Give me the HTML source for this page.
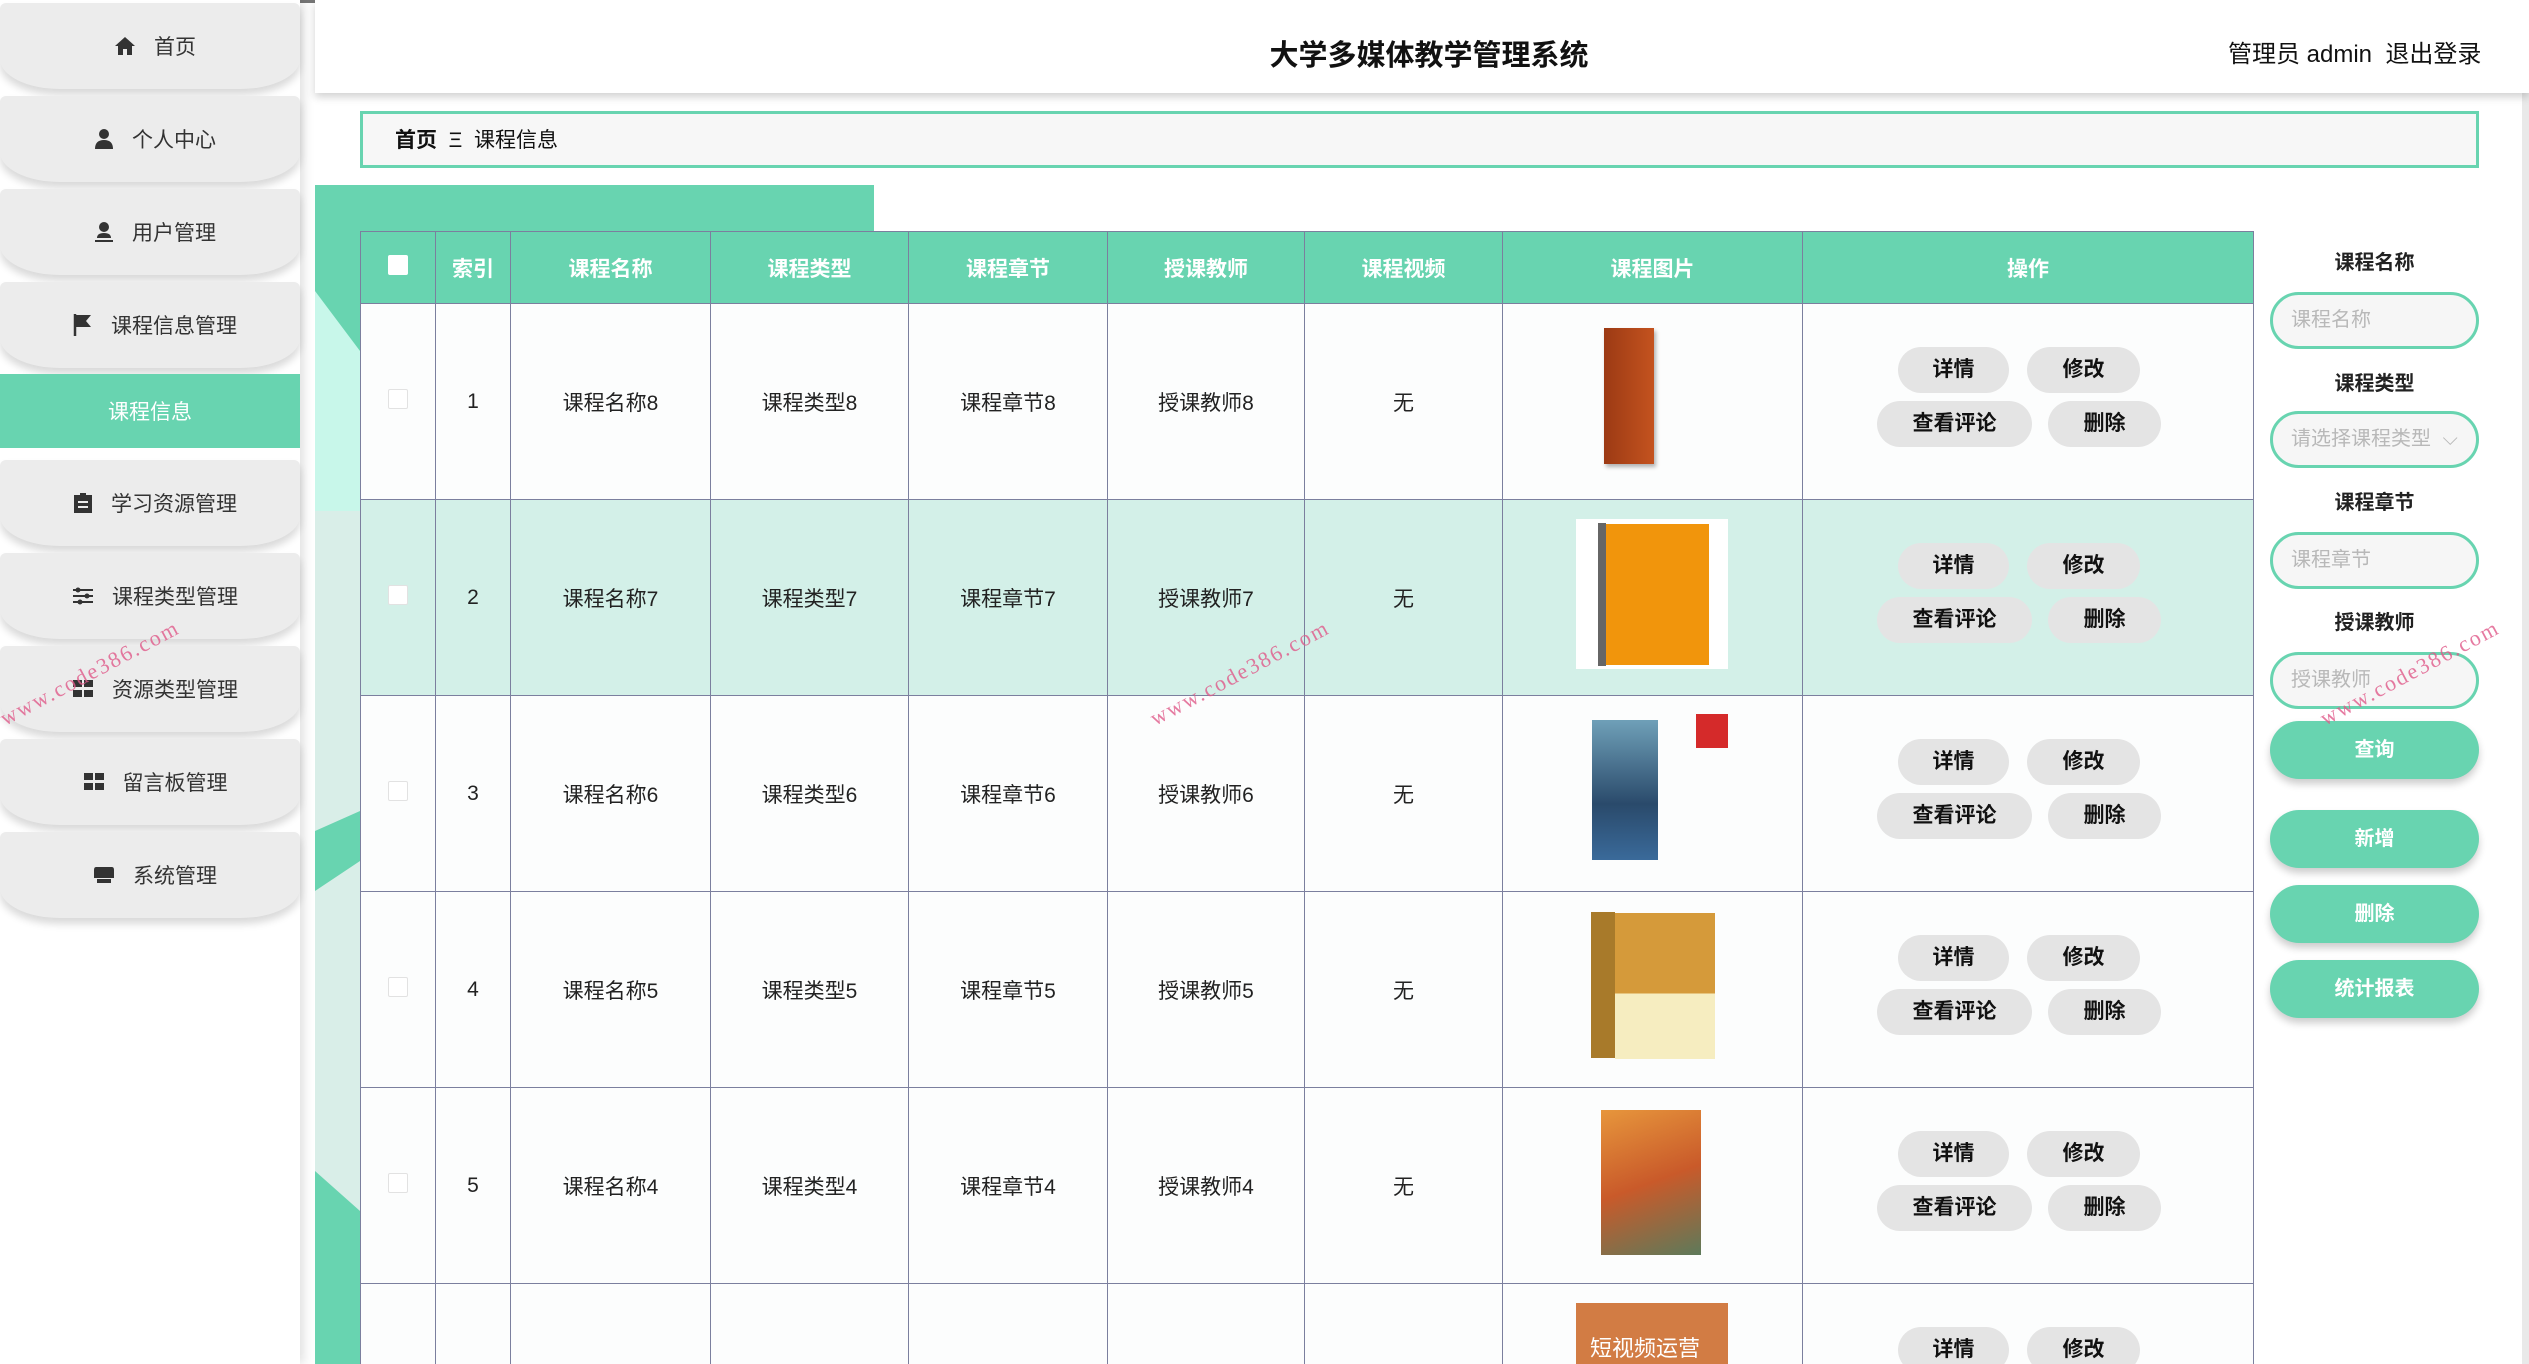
<!DOCTYPE html>
<html style="width:2529px;height:1364px;overflow:hidden"><head><meta charset="utf-8"><style>
*{margin:0;padding:0;box-sizing:border-box}
html,body{width:2529px;height:1364px;overflow:hidden}
body{background:#fff;font-family:"Liberation Sans","Noto Sans CJK SC",sans-serif;color:#222}
#wrap{position:relative;width:2529px;height:1364px;overflow:hidden}
.abs{position:absolute}
.side{left:0;top:0;width:300px;height:1364px;background:#fff;box-shadow:4px 0 10px rgba(0,0,0,.12)}
.it{position:absolute;left:0;width:300px;height:86px;padding-left:10px;background:#ececec;border-radius:6px 6px 60px 60px/6px 6px 30px 30px;box-shadow:0 6px 8px rgba(0,0,0,.15);display:flex;align-items:center;justify-content:center;font-size:21px;color:#333}
.it svg{margin-right:18px}
.act{background:#68d4b0;color:#fff;border-radius:0;box-shadow:none;height:74px;padding-left:0}
.top{left:315px;top:0;width:2214px;height:93px;background:#fff;box-shadow:0 4px 8px rgba(0,0,0,.18)}
table{border-collapse:collapse;position:absolute;left:360px;top:231px;table-layout:fixed}
td,th{border:1px solid #7b7f9e;text-align:center;font-size:21px}
th{background:#68d4b0;color:#fff;height:72px;font-weight:bold}
td{height:196px;background:#fcfdfd}
tr.last td{height:80px;border-bottom:none}
tr.m td{background:#d3f0e8}
.cb{display:inline-block;width:20px;height:20px;background:#fff;border:1px solid #e2e2e2;border-radius:2px}
.b{position:absolute;height:46px;border-radius:23px;background:#e4e4e4;font-weight:bold;font-size:21px;line-height:46px;text-align:center;color:#111}
.lab{position:absolute;left:2270px;width:209px;text-align:center;font-weight:bold;font-size:20px}
.inp{position:absolute;left:2270px;width:209px;height:57px;border:3px solid #68d4b0;border-radius:29px;background:#f6f6f6;color:#b8b8b8;font-size:20px;line-height:51px;padding-left:18px}
.gb{position:absolute;left:2270px;width:209px;height:58px;border-radius:29px;background:#68d4b0;color:#fff;font-weight:bold;font-size:20px;line-height:58px;text-align:center;box-shadow:0 5px 8px rgba(0,0,0,.2)}
.wm{position:absolute;color:#e05a8a;font-family:"Liberation Serif",serif;font-size:22px;transform:rotate(-28deg);opacity:.8;letter-spacing:2px}
</style></head><body><div id="wrap">
<div class="abs" style="left:0;top:0;width:2529px;height:3px;background:#777"></div>
<div class="abs side"></div>
<div class="abs" style="left:2522px;top:0;width:7px;height:1364px;background:#e9e9e9"></div>
<div class="it" style="top:3px"><svg width="22" height="20" viewBox="0 0 22 20"><path d="M11 1 L21 10 H18 V19 H13 V13 H9 V19 H4 V10 H1 Z" fill="#333"/></svg>首页</div>
<div class="it" style="top:96px"><svg width="20" height="22" viewBox="0 0 20 22"><circle cx="10" cy="6" r="5" fill="#333"/><path d="M1 21 Q1 12 10 12 Q19 12 19 21Z" fill="#333"/></svg>个人中心</div>
<div class="it" style="top:189px"><svg width="20" height="22" viewBox="0 0 20 22"><circle cx="10" cy="6" r="5" fill="#333"/><path d="M3 17 Q3 12 10 12 Q17 12 17 17Z M1 19 H19 V21 H1Z" fill="#333"/></svg>用户管理</div>
<div class="it" style="top:282px"><svg width="20" height="24" viewBox="0 0 20 24"><path d="M2 1 V23" stroke="#333" stroke-width="2.5"/><path d="M3 2 H18 L13 8 L18 14 H3Z" fill="#333"/></svg>课程信息管理</div>
<div class="it act" style="top:374px">课程信息</div>
<div class="it" style="top:460px"><svg width="20" height="22" viewBox="0 0 20 22"><path d="M1 3 H19 V21 H1Z" fill="#333"/><rect x="7" y="1" width="6" height="4" fill="#333"/><path d="M5 10 H15 M5 15 H15" stroke="#ececec" stroke-width="2"/></svg>学习资源管理</div>
<div class="it" style="top:553px"><svg width="22" height="18" viewBox="0 0 22 18"><path d="M1 3 H21 M1 9 H21 M1 15 H21" stroke="#333" stroke-width="2"/><circle cx="6" cy="3" r="2.5" fill="#333"/><circle cx="15" cy="9" r="2.5" fill="#333"/><circle cx="8" cy="15" r="2.5" fill="#333"/></svg>课程类型管理</div>
<div class="it" style="top:646px"><svg width="22" height="20" viewBox="0 0 22 20"><rect x="1" y="1" width="9" height="7" fill="#333"/><rect x="12" y="1" width="9" height="7" fill="#333"/><rect x="1" y="11" width="9" height="7" fill="#333"/><rect x="12" y="11" width="9" height="7" fill="#333"/></svg>资源类型管理</div>
<div class="it" style="top:739px"><svg width="22" height="20" viewBox="0 0 22 20"><rect x="1" y="1" width="9" height="7" fill="#333"/><rect x="12" y="1" width="9" height="7" fill="#333"/><rect x="1" y="11" width="9" height="7" fill="#333"/><rect x="12" y="11" width="9" height="7" fill="#333"/></svg>留言板管理</div>
<div class="it" style="top:832px"><svg width="22" height="18" viewBox="0 0 22 18"><path d="M3 1 H19 Q21 1 21 4 V12 H1 V4 Q1 1 3 1Z M4 13 H18 V17 H4Z" fill="#333"/></svg>系统管理</div>

<div class="abs top"></div>
<div class="abs" style="left:315px;top:32px;width:2228px;text-align:center;font-size:29px;font-weight:bold;color:#111">大学多媒体教学管理系统</div>
<div class="abs" style="left:2228px;top:34px;font-size:24px;color:#111">管理员 admin&nbsp;&nbsp;退出登录</div>

<div class="abs" style="left:360px;top:111px;width:2119px;height:57px;border:3px solid #68d4b0;background:#f7f7f7;font-size:21px;line-height:53px;padding-left:32px;color:#111"><b>首页</b>&nbsp;&nbsp;Ξ&nbsp;&nbsp;课程信息</div>

<div class="abs" style="left:315px;top:185px;width:559px;height:50px;background:#68d4b0"></div>
<svg class="abs" style="left:315px;top:231px" width="45" height="1133" viewBox="0 0 45 1133">
<rect width="45" height="1133" fill="#c8f7ea"/>
<polygon points="0,0 45,0 45,120 0,60" fill="#68d4b0"/>
<rect y="280" width="45" height="853" fill="#d9eee8"/>
<polygon points="0,600 45,580 45,630 0,660" fill="#68d4b0"/>
<polygon points="0,940 45,980 45,1133 0,1133" fill="#68d4b0"/>
</svg>

<table>
<colgroup><col style="width:75px"><col style="width:75px"><col style="width:200px"><col style="width:198px"><col style="width:199px"><col style="width:197px"><col style="width:198px"><col style="width:300px"><col style="width:451px"></colgroup>
<tr><th><span class="cb" style="border:none"></span></th><th>索引</th><th>课程名称</th><th>课程类型</th><th>课程章节</th><th>授课教师</th><th>课程视频</th><th>课程图片</th><th>操作</th></tr>
<tr><td><span class="cb"></span></td><td>1</td><td>课程名称8</td><td>课程类型8</td><td>课程章节8</td><td>授课教师8</td><td>无</td><td></td><td></td></tr>
<tr class="m"><td><span class="cb"></span></td><td>2</td><td>课程名称7</td><td>课程类型7</td><td>课程章节7</td><td>授课教师7</td><td>无</td><td></td><td></td></tr>
<tr><td><span class="cb"></span></td><td>3</td><td>课程名称6</td><td>课程类型6</td><td>课程章节6</td><td>授课教师6</td><td>无</td><td></td><td></td></tr>
<tr><td><span class="cb"></span></td><td>4</td><td>课程名称5</td><td>课程类型5</td><td>课程章节5</td><td>授课教师5</td><td>无</td><td></td><td></td></tr>
<tr><td><span class="cb"></span></td><td>5</td><td>课程名称4</td><td>课程类型4</td><td>课程章节4</td><td>授课教师4</td><td>无</td><td></td><td></td></tr>
<tr class="last"><td></td><td></td><td></td><td></td><td></td><td></td><td></td><td></td><td></td></tr>
</table>

<div class="abs" style="left:1604px;top:328px;width:50px;height:136px;background:linear-gradient(90deg,#9c3a14,#c4531f);box-shadow:2px 3px 4px rgba(0,0,0,.3)"></div>
<div class="abs" style="left:1576px;top:519px;width:152px;height:150px;background:#fff"></div>
<div class="abs" style="left:1598px;top:523px;width:8px;height:143px;background:#666"></div>
<div class="abs" style="left:1606px;top:524px;width:103px;height:141px;background:#f1950c"></div>
<div class="abs" style="left:1592px;top:720px;width:66px;height:140px;background:linear-gradient(180deg,#6fa0b8,#2a4a6b 60%,#3a6a9a)"></div>
<div class="abs" style="left:1696px;top:714px;width:32px;height:34px;background:#d52a2a"></div>
<div class="abs" style="left:1591px;top:912px;width:24px;height:146px;background:#a87a2a"></div>
<div class="abs" style="left:1615px;top:913px;width:100px;height:146px;background:linear-gradient(180deg,#d59a3a 55%,#f6edc0 55%)"></div>
<div class="abs" style="left:1601px;top:1110px;width:100px;height:145px;background:linear-gradient(160deg,#e7963c,#c95a2a 50%,#5d7a5a)"></div>
<div class="abs" style="left:1576px;top:1303px;width:152px;height:61px;background:#d27c44;color:#fff;font-size:22px;padding:28px 0 0 14px;overflow:hidden">短视频运营</div>

<div id="ops"></div>
<script>
var h='';for(var i=0;i<6;i++){var y=347+i*196;var y2=y+54;h+='<div class="b" style="left:1898px;top:'+y+'px;width:111px">详情</div><div class="b" style="left:2027px;top:'+y+'px;width:113px">修改</div>';if(y2+46<=1364)h+='<div class="b" style="left:1877px;top:'+y2+'px;width:155px">查看评论</div><div class="b" style="left:2048px;top:'+y2+'px;width:113px">删除</div>';}
document.getElementById('ops').innerHTML=h;
</script>

<div class="lab" style="top:246px">课程名称</div>
<div class="inp" style="top:292px">课程名称</div>
<div class="lab" style="top:367px">课程类型</div>
<div class="inp" style="top:411px">请选择课程类型 <span style="margin-left:6px">⌵</span></div>
<div class="lab" style="top:486px">课程章节</div>
<div class="inp" style="top:532px">课程章节</div>
<div class="lab" style="top:606px">授课教师</div>
<div class="inp" style="top:652px">授课教师</div>
<div class="gb" style="top:721px">查询</div>
<div class="gb" style="top:810px">新增</div>
<div class="gb" style="top:885px">删除</div>
<div class="gb" style="top:960px">统计报表</div>

<div class="wm" style="left:-10px;top:660px">www.code386.com</div>
<div class="wm" style="left:1140px;top:660px">www.code386.com</div>
<div class="wm" style="left:2310px;top:660px">www.code386.com</div>
</div></body></html>
